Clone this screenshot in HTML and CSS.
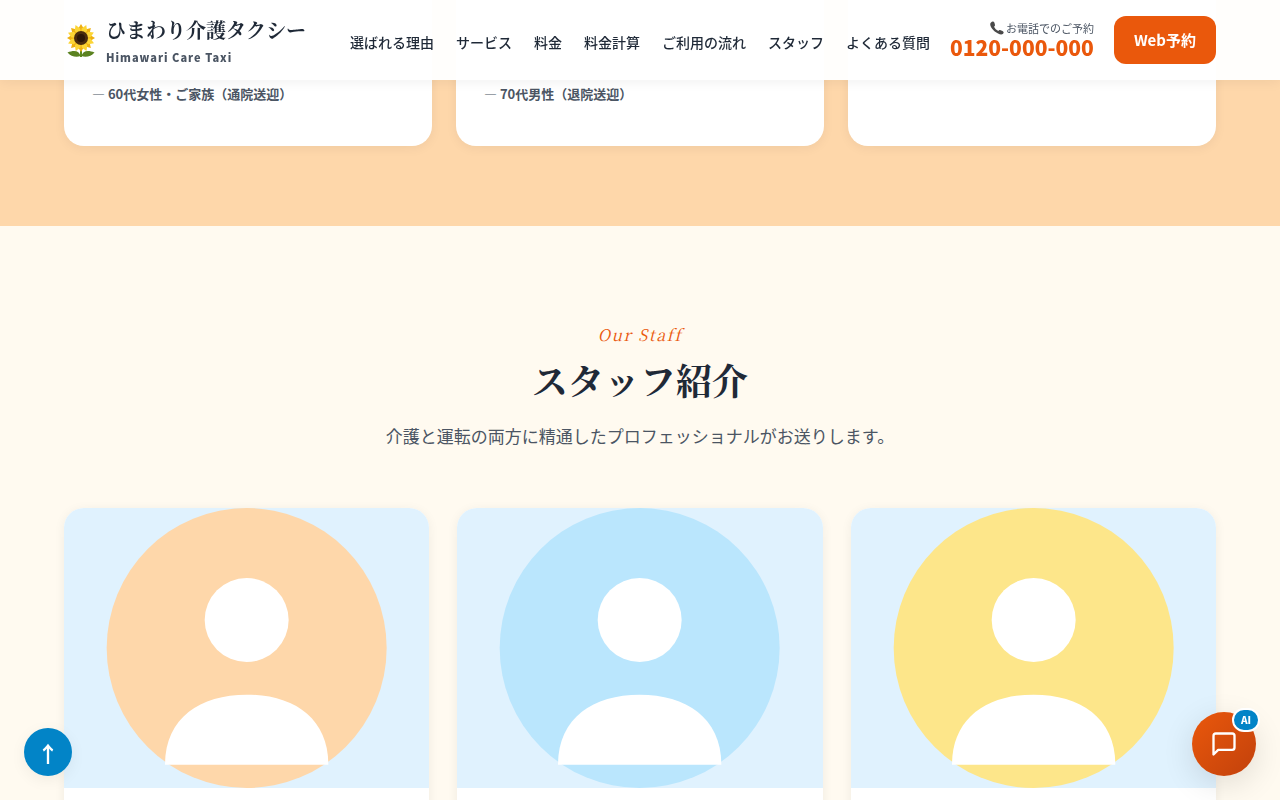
FILE: index.html
```html
<!DOCTYPE html>
<html lang="ja">
<head>
  <meta charset="UTF-8">
  <meta name="viewport" content="width=device-width, initial-scale=1.0">
  <title>ひまわり介護タクシー</title>
  <link rel="stylesheet" href="styles.css">
</head>
<body>
  <!-- ヘッダー -->
  <header class="header">
    <div class="container header-inner">
      <a href="#" class="logo">
        <svg class="logo-icon" viewBox="0 0 34 34" aria-hidden="true">
          <!-- 茎と葉 -->
          <path d="M17 24v10" stroke="#5d8a1e" stroke-width="2"/>
          <path d="M16.500 33c-1-5-6-6.500-13-3.500 3 4 9 5 13 3.500z" fill="#5b8221"/>
          <path d="M17.500 33c1-5 6-6.500 13-3.500-3 4-9 5-13 3.500z" fill="#5b8221"/>
          <!-- 花びら -->
          <g id="petals" fill="#eeb010">
            <path d="M17 15l-3-9 3-5 3 5z"/>
            <path d="M17 15l-3-9 3-5 3 5z" transform="rotate(45 17 15)"/>
            <path d="M17 15l-3-9 3-5 3 5z" transform="rotate(90 17 15)"/>
            <path d="M17 15l-3-9 3-5 3 5z" transform="rotate(135 17 15)"/>
            <path d="M17 15l-3-9 3-5 3 5z" transform="rotate(180 17 15)"/>
            <path d="M17 15l-3-9 3-5 3 5z" transform="rotate(225 17 15)"/>
            <path d="M17 15l-3-9 3-5 3 5z" transform="rotate(270 17 15)"/>
            <path d="M17 15l-3-9 3-5 3 5z" transform="rotate(315 17 15)"/>
          </g>
          <g fill="#fcd535" transform="rotate(22 17 15)">
            <path d="M17 15l-3-9 3-5 3 5z"/>
            <path d="M17 15l-3-9 3-5 3 5z" transform="rotate(45 17 15)"/>
            <path d="M17 15l-3-9 3-5 3 5z" transform="rotate(90 17 15)"/>
            <path d="M17 15l-3-9 3-5 3 5z" transform="rotate(135 17 15)"/>
            <path d="M17 15l-3-9 3-5 3 5z" transform="rotate(180 17 15)"/>
            <path d="M17 15l-3-9 3-5 3 5z" transform="rotate(225 17 15)"/>
            <path d="M17 15l-3-9 3-5 3 5z" transform="rotate(270 17 15)"/>
            <path d="M17 15l-3-9 3-5 3 5z" transform="rotate(315 17 15)"/>
          </g>
          <circle cx="17" cy="15" r="7" fill="#4a2d0e"/>
          <circle cx="17" cy="15" r="4" fill="#2b1708"/>
        </svg>
        <span class="logo-text">
          <span class="logo-name">ひまわり介護タクシー</span>
          <span class="logo-sub">Himawari Care Taxi</span>
        </span>
      </a>
      <div class="header-right">
        <nav class="nav">
          <a href="#reason">選ばれる理由</a>
          <a href="#service">サービス</a>
          <a href="#price">料金</a>
          <a href="#calc">料金計算</a>
          <a href="#flow">ご利用の流れ</a>
          <a href="#staff">スタッフ</a>
          <a href="#faq">よくある質問</a>
        </nav>
        <a href="tel:0120000000" class="tel">
          <span class="tel-label">
            <svg class="tel-icon" viewBox="0 0 14 14" aria-hidden="true">
              <path d="M1 1.500C2.500 0 4 .5 4.500 2l.5 2c.2 1-1 1.200-.8 2 .6 1.500 2.200 3 3.800 3.700.9.300 1.100-1 2-.7l2.500 1c1.500.7 1.500 2 .3 3C9.500 15 1.500 9 .4 4.500.1 3.300.1 2.300 1 1.500z" fill="#4a4a4a"/>
            </svg>
            お電話でのご予約
          </span>
          <span class="tel-number">0120-000-000</span>
        </a>
        <a href="#reserve" class="btn-reserve">Web予約</a>
      </div>
    </div>
  </header>

  <main>
    <!-- お客様の声 -->
    <section class="voice">
      <div class="container voice-grid">
        <div class="voice-card"><p class="voice-author">60代女性・ご家族（通院送迎）</p></div>
        <div class="voice-card"><p class="voice-author">70代男性（退院送迎）</p></div>
        <div class="voice-card"></div>
      </div>
    </section>

    <!-- スタッフ紹介 -->
    <section class="staff" id="staff">
      <div class="container">
        <div class="section-head">
          <p class="section-en">Our Staff</p>
          <h2 class="section-title">スタッフ紹介</h2>
          <p class="section-lead">介護と運転の両方に精通したプロフェッショナルがお送りします。</p>
        </div>
        <div class="staff-grid">
          <article class="staff-card">
            <svg class="staff-photo" viewBox="0 0 120 120" aria-hidden="true">
              <circle cx="60" cy="60" r="60" fill="#fed7aa"/>
              <circle cx="60" cy="48" r="18" fill="#fff"/>
              <path d="M25 110c0-20 15-30 35-30s35 10 35 30z" fill="#fff"/>
            </svg>
            <div class="staff-body"></div>
          </article>
          <article class="staff-card">
            <svg class="staff-photo" viewBox="0 0 120 120" aria-hidden="true">
              <circle cx="60" cy="60" r="60" fill="#bae6fd"/>
              <circle cx="60" cy="48" r="18" fill="#fff"/>
              <path d="M25 110c0-20 15-30 35-30s35 10 35 30z" fill="#fff"/>
            </svg>
            <div class="staff-body"></div>
          </article>
          <article class="staff-card">
            <svg class="staff-photo" viewBox="0 0 120 120" aria-hidden="true">
              <circle cx="60" cy="60" r="60" fill="#fde68a"/>
              <circle cx="60" cy="48" r="18" fill="#fff"/>
              <path d="M25 110c0-20 15-30 35-30s35 10 35 30z" fill="#fff"/>
            </svg>
            <div class="staff-body"></div>
          </article>
        </div>
      </div>
    </section>
  </main>

  <button type="button" class="page-top" aria-label="ページトップへ">↑</button>

  <button type="button" class="chat-btn" aria-label="AIチャット">
    <svg width="28" height="28" viewBox="0 0 24 24" fill="none" stroke="#fff" stroke-width="2" stroke-linecap="round" stroke-linejoin="round">
      <path d="M21 15a2 2 0 0 1-2 2H7l-4 4V5a2 2 0 0 1 2-2h14a2 2 0 0 1 2 2z"/>
    </svg>
    <span class="chat-badge">AI</span>
  </button>

  <script>
    document.querySelector('.page-top').addEventListener('click', () => {
      window.scrollTo({ top: 0, behavior: 'smooth' });
    });
  </script>
</body>
</html>
```
FILE: styles.css
```css
* {
  box-sizing: border-box;
  margin: 0;
  padding: 0;
}
body {
  font-family: "Noto Sans CJK JP", sans-serif;
  font-size: 17px;
  line-height: 1.8;
  color: #1f2937;
  background: #fffaf0;
}
a {
  color: inherit;
  text-decoration: none;
}
button {
  font-family: inherit;
  border: none;
  cursor: pointer;
}
.container {
  max-width: 1200px;
  margin: 0 auto;
  padding: 0 24px;
}

/* header */
.header {
  position: fixed;
  top: 0;
  left: 0;
  right: 0;
  z-index: 100;
  background: rgba(255, 255, 255, 0.97);
  box-shadow: 0 2px 12px rgba(0, 0, 0, 0.06);
}
.header-inner {
  display: flex;
  align-items: center;
  justify-content: space-between;
  height: 80px;
}
.logo {
  display: flex;
  align-items: center;
  gap: 8px;
}
.logo-icon {
  width: 34px;
  height: 34px;
}
.logo-text {
  display: flex;
  flex-direction: column;
}
.logo-name {
  font-family: "Noto Serif CJK JP", "Noto Serif JP", serif;
  font-size: 20px;
  font-weight: 700;
  line-height: 34px;
}
.logo-sub {
  font-size: 11px;
  font-weight: 900;
  line-height: 20px;
  letter-spacing: 1px;
  color: #4b5563;
}
.header-right {
  display: flex;
  align-items: center;
}
.nav {
  display: flex;
  gap: 22px;
  margin-right: 20px;
  padding-top: 6px;
  font-size: 14px;
  font-weight: 500;
}
.tel {
  display: flex;
  flex-direction: column;
  align-items: flex-end;
  margin-right: 20px;
}
.tel-label {
  display: flex;
  align-items: center;
  gap: 2px;
  font-size: 11px;
  line-height: 16px;
  color: #4b5563;
}
.tel-icon {
  width: 14px;
  height: 14px;
}
.tel-number {
  margin-bottom: 2px;
  font-size: 21px;
  font-weight: 900;
  line-height: 22px;
  color: #ea580c;
}
.btn-reserve {
  padding: 0 20px;
  border-radius: 12px;
  background: #ea580c;
  color: #fff;
  font-size: 15px;
  font-weight: 700;
  line-height: 48px;
}

/* voice */
.voice {
  padding-bottom: 80px;
  background: #fed7aa;
}
.voice-grid {
  display: grid;
  grid-template-columns: repeat(3, 1fr);
  gap: 24px;
}
.voice-card {
  padding: 82px 28px 40px;
  background: #fff;
  border-radius: 0 0 20px 20px;
  box-shadow: 0 2px 12px rgba(0, 0, 0, 0.06);
}
.voice-author {
  font-size: 13px;
  font-weight: 700;
  line-height: 24px;
  color: #4b5563;
}
.voice-author::before {
  content: "— ";
}

/* staff */
.staff {
  padding: 96px 0;
}
.section-head {
  margin-bottom: 56px;
  text-align: center;
}
.section-en {
  font-family: "Noto Serif CJK JP", "Noto Serif JP", serif;
  font-size: 16px;
  font-style: italic;
  line-height: 26px;
  letter-spacing: 0.1em;
  color: #ea580c;
}
.section-title {
  margin: 6px 0 14px;
  font-family: "Noto Serif CJK JP", "Noto Serif JP", serif;
  font-size: 36px;
  font-weight: 700;
  line-height: 52px;
}
.section-lead {
  line-height: 32px;
  color: #4b5563;
}
.staff-grid {
  display: grid;
  grid-template-columns: repeat(3, 1fr);
  gap: 28px;
}
.staff-card {
  overflow: hidden;
  background: #fff;
  border-radius: 20px;
  box-shadow: 0 2px 12px rgba(0, 0, 0, 0.06);
}
.staff-photo {
  display: block;
  width: 100%;
  height: 280px;
  background: #e0f2fe;
}
.staff-body {
  padding: 28px;
}

/* floating buttons */
.page-top {
  position: fixed;
  left: 24px;
  bottom: 24px;
  z-index: 90;
  width: 48px;
  height: 48px;
  border-radius: 50%;
  background: #0284c7;
  color: #fff;
  font-size: 22px;
  font-weight: 700;
  box-shadow: 0 4px 16px rgba(0, 0, 0, 0.06);
}
.chat-btn {
  position: fixed;
  right: 24px;
  bottom: 24px;
  z-index: 90;
  display: flex;
  align-items: center;
  justify-content: center;
  width: 64px;
  height: 64px;
  border-radius: 50%;
  background: linear-gradient(135deg, #ea580c, #c2410c);
  box-shadow: 0 8px 32px rgba(0, 0, 0, 0.12);
}
.chat-badge {
  position: absolute;
  top: -4px;
  right: -4px;
  padding: 0 7px;
  border: 2px solid #fff;
  border-radius: 12px;
  background: #0284c7;
  color: #fff;
  font-size: 10px;
  font-weight: 900;
  line-height: 20px;
}
```
